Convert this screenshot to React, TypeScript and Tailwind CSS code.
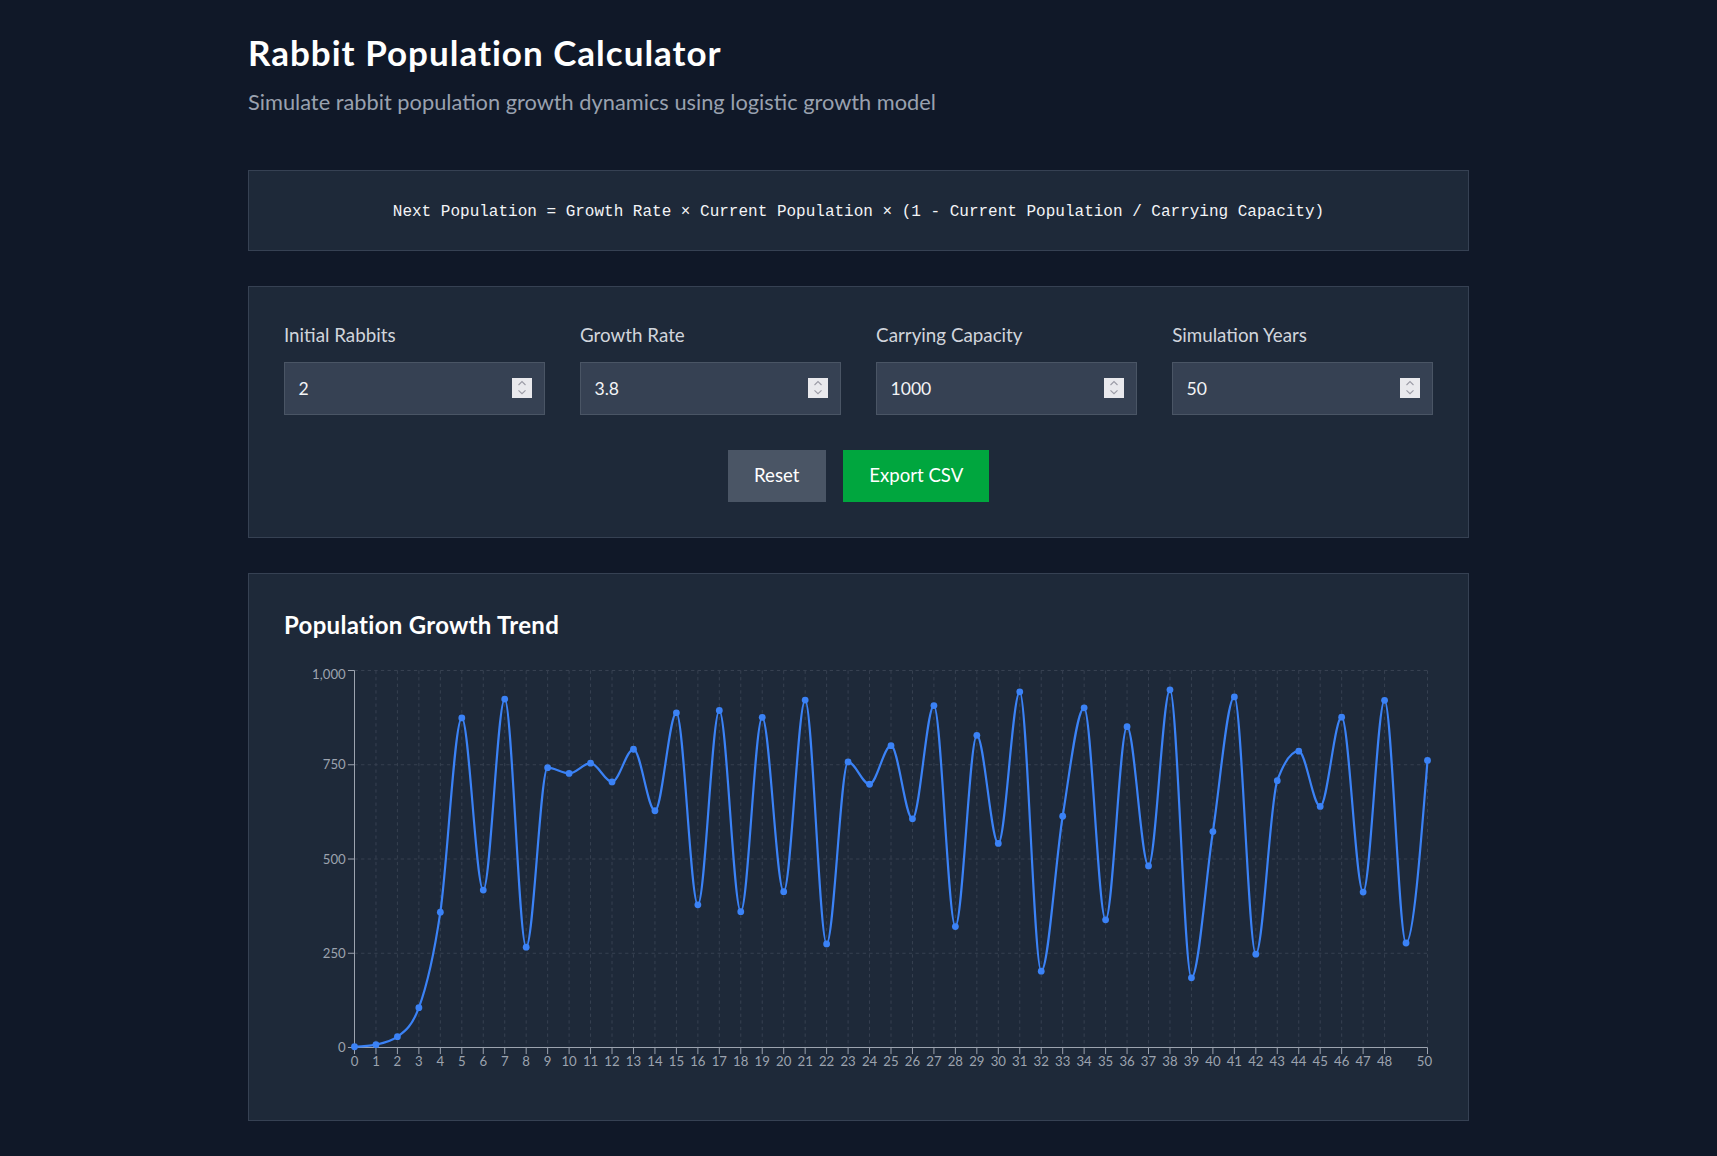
import { useMemo } from "react";

const RATE = 3.8;
const CAPACITY = 1000;
const YEARS = 50;

function simulate(initial: number, rate: number, cap: number, years: number) {
  const out: number[] = [initial];
  for (let i = 1; i <= years; i++) {
    const cur = out[i - 1];
    out.push(rate * cur * (1 - cur / cap));
  }
  return out;
}

// d3-style monotoneX curve through the points
function monotonePath(pts: { x: number; y: number }[]) {
  const n = pts.length;
  if (n < 2) return "";
  const sign = (v: number) => (v < 0 ? -1 : 1);
  const m: number[] = new Array(n).fill(0);
  for (let i = 1; i < n - 1; i++) {
    const h0 = pts[i].x - pts[i - 1].x;
    const h1 = pts[i + 1].x - pts[i].x;
    const s0 = (pts[i].y - pts[i - 1].y) / h0;
    const s1 = (pts[i + 1].y - pts[i].y) / h1;
    const p = (s0 * h1 + s1 * h0) / (h0 + h1);
    m[i] = (sign(s0) + sign(s1)) * Math.min(Math.abs(s0), Math.abs(s1), 0.5 * Math.abs(p)) || 0;
  }
  const hA = pts[1].x - pts[0].x;
  m[0] = (3 * (pts[1].y - pts[0].y) / hA - m[1]) / 2;
  const hB = pts[n - 1].x - pts[n - 2].x;
  m[n - 1] = (3 * (pts[n - 1].y - pts[n - 2].y) / hB - m[n - 2]) / 2;

  let d = `M${pts[0].x},${pts[0].y}`;
  for (let i = 0; i < n - 1; i++) {
    const a = pts[i];
    const b = pts[i + 1];
    const dx = (b.x - a.x) / 3;
    d += `C${a.x + dx},${a.y + dx * m[i]},${b.x - dx},${b.y - dx * m[i + 1]},${b.x},${b.y}`;
  }
  return d;
}

function Chart({ data }: { data: number[] }) {
  const W = 1149;
  const H = 420;
  const L = 70.5;
  const R = 1143.5;
  const T = 5.5;
  const B = 382.5;
  const xs = (i: number) => L + (i / YEARS) * (R - L);
  const ys = (v: number) => B - (v / CAPACITY) * (B - T);

  const pts = data.map((v, i) => ({ x: xs(i), y: ys(v) }));
  const xTicks = data.map((_, i) => i).filter((i) => i !== 49);
  const yTicks = [0, 250, 500, 750, 1000];

  return (
    <svg width={W} height={H} className="block overflow-visible">
      <g stroke="#374151" strokeDasharray="3.3 3.3" strokeWidth={1}>
        {yTicks.map((t) => (
          <line key={`h${t}`} x1={L} x2={R} y1={ys(t)} y2={ys(t)} />
        ))}
        {xTicks.map((i) => (
          <line key={`v${i}`} x1={xs(i)} x2={xs(i)} y1={T} y2={B} />
        ))}
      </g>

      <g stroke="#9ca3af" strokeWidth={1}>
        <line x1={L} x2={L} y1={T} y2={B} />
        <line x1={L} x2={R} y1={B} y2={B} />
        {yTicks.map((t) => (
          <line key={`yt${t}`} x1={L - 6.6} x2={L} y1={ys(t)} y2={ys(t)} />
        ))}
        {xTicks.map((i) => (
          <line key={`xt${i}`} x1={xs(i)} x2={xs(i)} y1={B} y2={B + 6.6} />
        ))}
      </g>

      <g fill="#9ca3af" fontSize={13.2} fontFamily="Lato, sans-serif">
        {yTicks.map((t) => (
          <text
            key={`yl${t}`}
            x={L - 8.8}
            y={t === 1000 ? ys(t) + 4.3 : ys(t)}
            dy="0.355em"
            textAnchor="end"
          >
            {t.toLocaleString("en-US")}
          </text>
        ))}
        {xTicks.map((i) => (
          <text
            key={`xl${i}`}
            x={i === YEARS ? xs(i) - 3 : xs(i)}
            y={B + 8.8}
            dy="0.71em"
            textAnchor="middle"
          >
            {i}
          </text>
        ))}
      </g>

      <path d={monotonePath(pts)} fill="none" stroke="#3b82f6" strokeWidth={2.2} />
      <g fill="#3b82f6">
        {pts.map((p, i) => (
          <circle key={i} cx={p.x} cy={p.y} r={3.4} />
        ))}
      </g>
    </svg>
  );
}

function Spinner() {
  return (
    <span className="pointer-events-none absolute right-[13px] top-1/2 -translate-y-1/2 h-[20px] w-[20px] bg-[#e9e9ed]">
      <svg width="20" height="20" viewBox="0 0 20 20" fill="none" stroke="#9b9ba6" strokeWidth="1.1">
        <path d="M6.5 7 L10 3.6 L13.5 7" />
        <path d="M6.5 12.3 L10 15.7 L13.5 12.3" />
      </svg>
    </span>
  );
}

function Field({ label, value }: { label: string; value: string }) {
  return (
    <div className="flex flex-col">
      <label className="text-[18.8px] leading-[26px] text-gray-300">{label}</label>
      <div className="relative mt-[13.5px]">
        <input
          type="number"
          defaultValue={value}
          className="h-[53px] w-full border border-gray-600 bg-gray-700 px-[13.4px] text-[17.6px] text-gray-100 outline-none [appearance:textfield] [&::-webkit-inner-spin-button]:appearance-none [&::-webkit-outer-spin-button]:appearance-none"
        />
        <Spinner />
      </div>
    </div>
  );
}

export default function App() {
  const data = useMemo(() => simulate(2, RATE, CAPACITY, YEARS), []);

  return (
    <div className="min-h-screen bg-gray-900 font-['Lato',sans-serif] text-white">
      <div className="mx-auto w-[1221px] pt-[32px] pb-[20px]">
        <h1 className="text-[35px] leading-[40px] font-bold tracking-[1px]">Rabbit Population Calculator</h1>
        <p className="mt-[14px] text-[21.8px] leading-[31px] text-gray-400">
          Simulate rabbit population growth dynamics using logistic growth model
        </p>

        <div className="mt-[53px] border border-gray-700 bg-gray-800 pt-[28px] pb-[24px] text-center font-['Liberation_Mono',monospace] text-[16px] leading-[27px] text-gray-100">
          Next Population = Growth Rate × Current Population × (1 - Current Population / Carrying Capacity)
        </div>

        <div className="mt-[35px] border border-gray-700 bg-gray-800 p-[35px]">
          <div className="grid grid-cols-4 gap-[35.2px]">
            <Field label="Initial Rabbits" value="2" />
            <Field label="Growth Rate" value="3.8" />
            <Field label="Carrying Capacity" value="1000" />
            <Field label="Simulation Years" value="50" />
          </div>
          <div className="mt-[35.5px] flex justify-center gap-[17.6px]">
            <button className="h-[52px] w-[98px] bg-gray-600 text-[18.6px] text-white">Reset</button>
            <button className="h-[52px] w-[146px] bg-green-600 text-[18.6px] text-white">Export CSV</button>
          </div>
        </div>

        <div className="mt-[35px] border border-gray-700 bg-gray-800 p-[35px]">
          <h2 className="mb-[25px] text-[24px] leading-[31px] font-bold tracking-[0.3px]">Population Growth Trend</h2>
          <Chart data={data} />
        </div>
      </div>
    </div>
  );
}
